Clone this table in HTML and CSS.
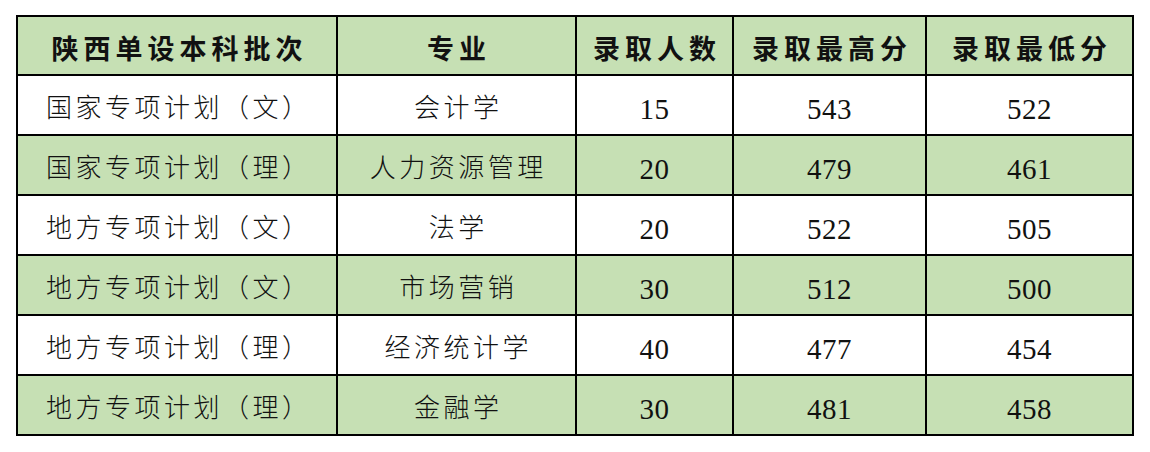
FILE: index.html
```html
<!DOCTYPE html>
<html lang="zh-CN">
<head>
<meta charset="utf-8">
<title>陕西单设本科批次</title>
<link rel="stylesheet" href="styles.css">
</head>
<body>
<table class="score-table">
  <colgroup>
    <col class="c1"><col class="c2"><col class="c3"><col class="c4"><col class="c5">
  </colgroup>
  <thead>
    <tr class="green">
      <th>陕西单设本科批次</th>
      <th>专业</th>
      <th>录取人数</th>
      <th>录取最高分</th>
      <th>录取最低分</th>
    </tr>
  </thead>
  <tbody>
    <tr><td class="zh">国家专项计划（文）</td><td class="zh">会计学</td><td class="num">15</td><td class="num">543</td><td class="num">522</td></tr>
    <tr class="green"><td class="zh">国家专项计划（理）</td><td class="zh">人力资源管理</td><td class="num">20</td><td class="num">479</td><td class="num">461</td></tr>
    <tr><td class="zh">地方专项计划（文）</td><td class="zh">法学</td><td class="num">20</td><td class="num">522</td><td class="num">505</td></tr>
    <tr class="green"><td class="zh">地方专项计划（文）</td><td class="zh">市场营销</td><td class="num">30</td><td class="num">512</td><td class="num">500</td></tr>
    <tr><td class="zh">地方专项计划（理）</td><td class="zh">经济统计学</td><td class="num">40</td><td class="num">477</td><td class="num">454</td></tr>
    <tr class="green"><td class="zh">地方专项计划（理）</td><td class="zh">金融学</td><td class="num">30</td><td class="num">481</td><td class="num">458</td></tr>
  </tbody>
</table>
</body>
</html>
```

FILE: styles.css
```css
html, body {
  margin: 0;
  padding: 0;
  background: #ffffff;
}

body {
  padding: 15px 0 0 16px;
  font-family: "Liberation Serif", "Noto Sans CJK SC", serif;
  color: #111111;
}

.score-table {
  border-collapse: separate;
  border-spacing: 0;
  table-layout: fixed;
  width: 1118px;
  border-top: 2px solid #000;
  border-left: 2px solid #000;
}

.c1 { width: 320px; }
.c2 { width: 239px; }
.c3 { width: 157px; }
.c4 { width: 193px; }
.c5 { width: 207px; }

.score-table th,
.score-table td {
  box-sizing: border-box;
  border-right: 2px solid #000;
  border-bottom: 2px solid #000;
  text-align: center;
  vertical-align: middle;
  padding: 8px 0 0 0;
  white-space: nowrap;
  line-height: 1;
}

.score-table th {
  height: 59px;
  padding-top: 9px;
  font-size: 27px;
  font-weight: 700;
  letter-spacing: 5px;
  text-indent: 5px;
}

.score-table td {
  height: 60px;
}

.score-table td.zh {
  font-size: 26px;
  font-weight: 300;
  letter-spacing: 3.5px;
  text-indent: 3.5px;
}

.score-table td.num {
  font-size: 29px;
  letter-spacing: 0.5px;
}

.green th,
.green td {
  background: #c6e0b4;
}
```
